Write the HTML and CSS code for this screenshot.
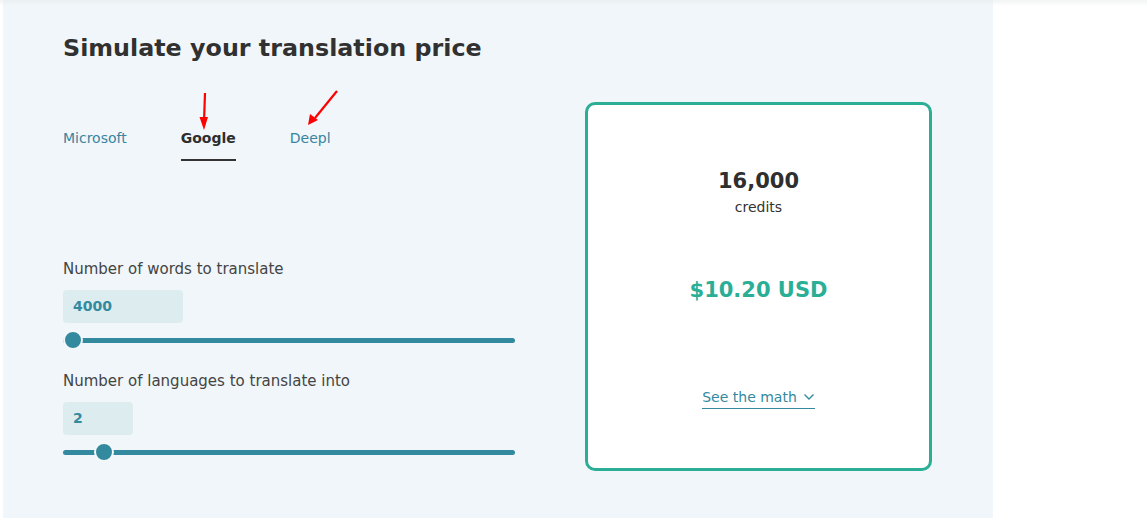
FILE: index.html
```html
<!DOCTYPE html>
<html lang="en">
<head>
<meta charset="utf-8">
<title>Simulate your translation price</title>
<link rel="stylesheet" href="styles.css">
</head>
<body>
<div class="page">
  <section class="panel">
    <h1 class="title">Simulate your translation price</h1>
    <div class="row">
      <div class="form">
        <nav class="tabs">
          <a class="tab">Microsoft</a>
          <a class="tab active">Google
            <svg class="arrow arrow-down" width="14" height="40" viewBox="0 0 14 40"><path d="M8 1 L7 30" stroke="#f00" stroke-width="2.2" fill="none"/><path d="M2.5 25 L7 38 L11 25 Z" fill="#f00"/></svg>
          </a>
          <a class="tab">Deepl
            <svg class="arrow arrow-diag" width="34" height="36" viewBox="0 0 34 36"><path d="M32 1 L10 28" stroke="#f00" stroke-width="2.2" fill="none"/><path d="M5 24 L3 35 L13 30 Z" fill="#f00"/></svg>
          </a>
        </nav>
        <label class="label">Number of words to translate</label>
        <div class="field wide">4000</div>
        <input class="slider" type="range" min="4000" max="100000" value="4000">
        <label class="label second">Number of languages to translate into</label>
        <div class="field narrow">2</div>
        <input class="slider" type="range" min="1" max="15" value="2">
      </div>
      <aside class="card">
        <div class="credits">16,000</div>
        <div class="credits-label">credits</div>
        <div class="price">$10.20 USD</div>
        <a class="math">See the math
          <svg class="chev" width="12" height="8" viewBox="0 0 12 8"><path d="M1.5 1.5 L6 6 L10.5 1.5" stroke="#338a9f" stroke-width="1.4" fill="none"/></svg>
        </a>
      </aside>
    </div>
  </section>
</div>
</body>
</html>
```
FILE: styles.css
```css
html, body {
  margin: 0;
  padding: 0;
}
body {
  background: #ffffff linear-gradient(#f2f3f4, #ffffff 6px) no-repeat;
  font-family: "DejaVu Sans", Verdana, sans-serif;
  color: #333;
  height: 518px;
  overflow: hidden;
}
.page {
  display: flex;
  padding-left: 3px;
}
.panel {
  width: 930px;
  height: 518px;
  background: #f0f6f9 linear-gradient(#ebeff2, #f0f6f9 6px) no-repeat;
  padding: 0 0 0 60px;
  box-sizing: content-box;
}
.title {
  margin: 0;
  padding-top: 34px;
  font-size: 23.8px;
  line-height: 28px;
  font-weight: bold;
  color: #313131;
}
.row {
  display: flex;
  align-items: flex-start;
  gap: 70px;
  margin-top: 40px;
}
.form {
  width: 452px;
  display: flex;
  flex-direction: column;
  align-items: flex-start;
}
.tabs {
  display: flex;
  gap: 54px;
  padding-top: 28px;
}
.tab {
  position: relative;
  font-size: 14px;
  line-height: 17px;
  color: #3a84a0;
  padding-bottom: 12px;
  border-bottom: 2px solid transparent;
}
.tab.active {
  color: #2e2e2e;
  font-weight: bold;
  border-bottom-color: #333;
}
.arrow {
  position: absolute;
}
.arrow-down {
  left: 16px;
  top: -38px;
}
.arrow-diag {
  left: 15px;
  top: -40px;
}
.label {
  font-size: 15px;
  line-height: 18px;
  color: #444;
  margin-top: 99px;
}
.label.second {
  margin-top: 22px;
}
.field {
  margin-top: 12px;
  height: 33px;
  box-sizing: border-box;
  padding: 0 10px;
  background: #dcecef;
  border-radius: 4px;
  font-size: 14px;
  font-weight: bold;
  color: #338a9f;
  line-height: 33px;
}
.field.wide { width: 120px; }
.field.narrow { width: 70px; }
.slider {
  -webkit-appearance: none;
  appearance: none;
  width: 452px;
  height: 20px;
  margin: 7px 0 0 0;
  padding: 0;
  background: transparent;
}
.slider::-webkit-slider-runnable-track {
  height: 5px;
  background: #338a9f;
  border-radius: 3px;
}
.slider::-webkit-slider-thumb {
  -webkit-appearance: none;
  width: 20px;
  height: 20px;
  margin-top: -7.5px;
  border-radius: 50%;
  background: #338a9f;
  border: 2px solid #f3f8fa;
  box-sizing: border-box;
}
.card {
  width: 347px;
  height: 369px;
  box-sizing: border-box;
  border: 3px solid #2aae96;
  border-radius: 10px;
  background: #fff;
  display: flex;
  flex-direction: column;
  align-items: center;
  padding-top: 63px;
}
.credits {
  font-size: 21px;
  line-height: 26px;
  font-weight: bold;
  color: #2f2f2f;
}
.credits-label {
  font-size: 14px;
  line-height: 18px;
  color: #333;
  margin-top: 4px;
}
.price {
  margin-top: 61px;
  font-size: 21px;
  line-height: 26px;
  font-weight: bold;
  color: #2aae96;
}
.math {
  margin-top: 85px;
  font-size: 14px;
  line-height: 18px;
  color: #338a9f;
  border-bottom: 1px solid #338a9f;
  padding-bottom: 2px;
  display: flex;
  align-items: center;
  gap: 6px;
}
.chev {
  display: block;
}
```
